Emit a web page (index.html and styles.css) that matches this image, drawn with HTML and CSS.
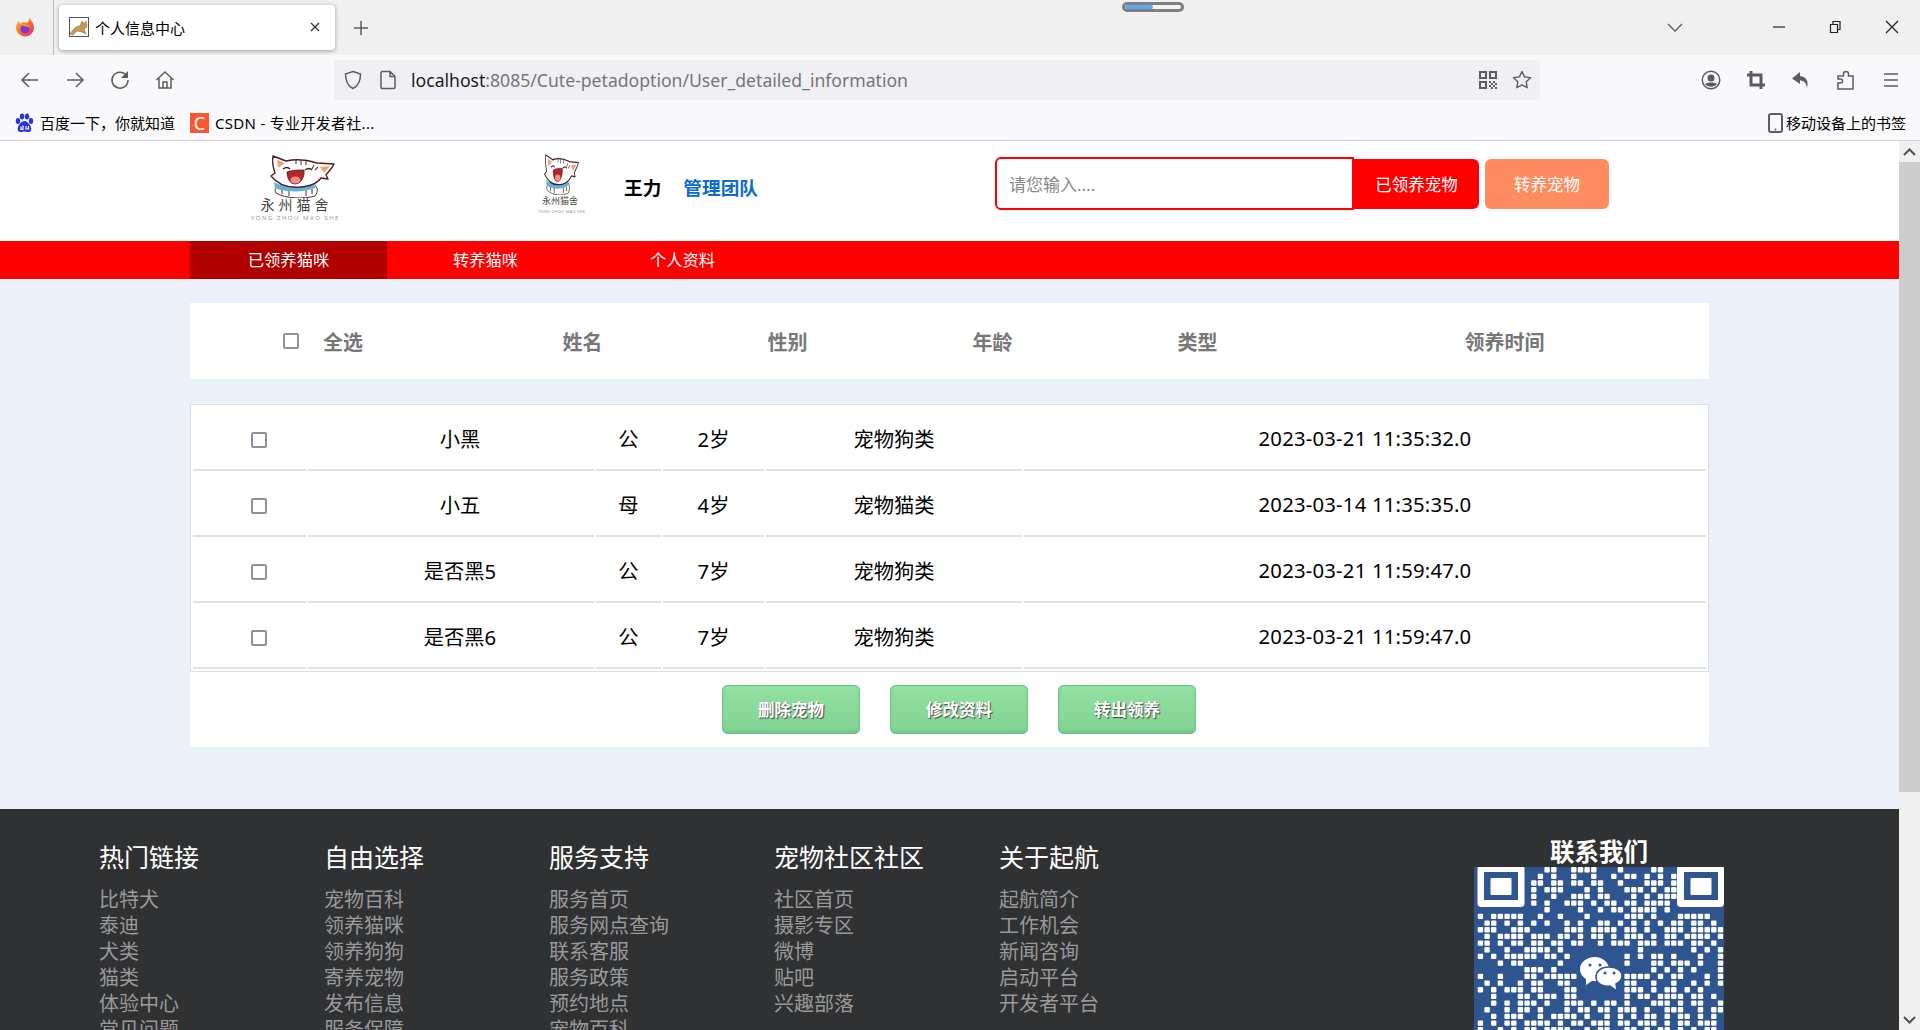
FILE: index.html
```html
<!DOCTYPE html>
<html lang="zh-CN">
<head>
    <meta charset="UTF-8">
    <meta name="viewport" content="width=device-width, initial-scale=1.0">
    <title>个人信息中心</title>
    <link rel="stylesheet" href="styles.css">
</head>
<body>
    <svg class="defs" width="0" height="0">
        <symbol id="cat" viewBox="0 0 65 43">
            <path d="M6 38 C3 33 8 30 14 30 L40 28 C48 30 49 36 45 41 C34 44 16 44 6 38Z" fill="#fff" stroke="#5a2a2a" stroke-width="1"/>
            <path d="M12 39v-5M19 41v-6M36 41v-6M42 39v-5" stroke="#5a2a2a" stroke-width="1"/>
            <path d="M4 27 C14 33 32 34 46 27 L45 33 C32 38 14 37 5 33Z" fill="#5fb3dc"/>
            <path d="M3 1 L16 6 C26 4 38 5 47 8 L64 9 C62 14 58 17 56 20 L58 24 L51 23 C46 30 34 33 24 32 C14 32 6 27 1 21 L5 18 C3 12 2 6 3 1Z" fill="#fff" stroke="#4a1f22" stroke-width="1.4" stroke-linejoin="round"/>
            <path d="M7 5 L15 8 L8 13Z" fill="#f6a173"/>
            <path d="M60 11 L50 12 L54 18Z" fill="#f6a173"/>
            <path d="M26 5v4M31 5v5M36 6v4M44 10l-2 4M48 12l-3 3" stroke="#5a4a4a" stroke-width="1.2"/>
            <path d="M13 14 q4-3 7 0M35 15 q4-3 7 0" fill="none" stroke="#3a1a1a" stroke-width="1.3"/>
            <path d="M17 17 C22 15 30 15 34 15 C35 23 30 29 25 29 C20 29 17 23 17 17Z" fill="#b3242c" stroke="#4a1f22" stroke-width=".8"/>
            <ellipse cx="25.500" cy="25" rx="5" ry="3.500" fill="#f08d8d"/>
        </symbol>
    </svg>

    <div class="browser">
        <div class="tabbar">
            <div class="ff-box">
                <svg width="20" height="20" viewBox="0 0 20 20">
                    <defs>
                        <linearGradient id="fox" x1="0" y1="0" x2="1" y2="1">
                            <stop offset="0" stop-color="#ffcb2e"/>
                            <stop offset=".5" stop-color="#ff6a2b"/>
                            <stop offset="1" stop-color="#e5266d"/>
                        </linearGradient>
                    </defs>
                    <path d="M14 0 C16 2 19 5 19 10 A9 9.500 0 1 1 1 8 C2 6 3 4 4 3 L5 6 C7 4 10 4 12 5 C14 4 14 2 14 0Z" fill="url(#fox)"/>
                    <circle cx="10" cy="11" r="4.500" fill="#7a3bd0"/>
                    <path d="M5 7 C8 5 14 6 15 10 C12 8 8 8 5 7Z" fill="#ff9a2e"/>
                </svg>
            </div>
            <div class="tab">
                <svg class="tab-icon" width="20" height="20" viewBox="0 0 20 20">
                    <rect x=".5" y=".5" width="19" height="19" fill="#fff" stroke="#555"/>
                    <path d="M1 17 C4 12 7 9 11 9 L13 4 L14 6 L16 6 L17 4 L18 10 L15 12 L17 17 L13 15 L8 14 L4 18Z" fill="#c79a4e" stroke="#7a5a20" stroke-width=".5"/>
                </svg>
                <span class="tab-title">个人信息中心</span>
                <svg class="tab-close" width="12" height="12" viewBox="0 0 12 12">
                    <path d="M2 2l8 8M10 2l-8 8" stroke="#333" stroke-width="1.300"/>
                </svg>
            </div>
            <svg class="new-tab" width="16" height="16" viewBox="0 0 16 16">
                <path d="M8 1v14M1 8h14" stroke="#5b5b66" stroke-width="1.500"/>
            </svg>
            <svg class="tab-list" width="16" height="10" viewBox="0 0 16 10">
                <path d="M1 1l7 7 7-7" fill="none" stroke="#5b5b66" stroke-width="1.300"/>
            </svg>
            <div class="win-btn">
                <svg width="14" height="14" viewBox="0 0 14 14"><path d="M1 7h12" stroke="#222" stroke-width="1.200"/></svg>
            </div>
            <div class="win-btn">
                <svg width="14" height="14" viewBox="0 0 14 14"><path d="M2.500 4.500h7v8h-7zM5 4.500v-3h7v8h-2.500" fill="none" stroke="#222" stroke-width="1.200"/></svg>
            </div>
            <div class="win-btn">
                <svg width="14" height="14" viewBox="0 0 14 14"><path d="M1 1l12 12M13 1l-12 12" stroke="#222" stroke-width="1.200"/></svg>
            </div>
        </div>
        <div class="pill"><span class="pill-fill"></span></div>

        <div class="toolbar">
            <div class="tool-btn">
                <svg width="20" height="20" viewBox="0 0 20 20"><path d="M18 10H2M9 3l-7 7 7 7" fill="none" stroke="#5b5b66" stroke-width="1.500"/></svg>
            </div>
            <div class="tool-btn">
                <svg width="20" height="20" viewBox="0 0 20 20"><path d="M2 10h16M11 3l7 7-7 7" fill="none" stroke="#5b5b66" stroke-width="1.500"/></svg>
            </div>
            <div class="tool-btn">
                <svg width="20" height="20" viewBox="0 0 20 20"><path d="M16.500 5.500A8 8 0 1 0 18 10" fill="none" stroke="#5b5b66" stroke-width="1.500"/><path d="M18 1v7h-7z" fill="#5b5b66"/></svg>
            </div>
            <div class="tool-btn">
                <svg width="20" height="20" viewBox="0 0 20 20"><path d="M1.500 10L10 2l8.500 8M4 8.500V18h12V8.500M8 18v-6h4v6" fill="none" stroke="#5b5b66" stroke-width="1.500"/></svg>
            </div>
            <div class="urlbar">
                <svg width="20" height="20" viewBox="0 0 20 20"><path d="M10 1.500L17.500 4C17.500 11 15 16 10 18.500 5 16 2.500 11 2.500 4Z" fill="none" stroke="#5b5b66" stroke-width="1.500"/></svg>
                <svg width="18" height="20" viewBox="0 0 18 20"><path d="M3 1.500h8l5 5V17a1.500 1.500 0 0 1-1.500 1.500h-11.500A1.500 1.500 0 0 1 2 17V2.500ZM11 1.500V6.500h5" fill="none" stroke="#5b5b66" stroke-width="1.500"/></svg>
                <span class="url-text"><span class="url-host">localhost</span>:8085/Cute-petadoption/User_detailed_information</span>
                <svg class="url-qr" width="18" height="18" viewBox="0 0 18 18">
                    <path d="M0 0h8v8H0zM2 2v4h4V2zM10 0h8v8h-8zM12 2v4h4V2zM0 10h8v8H0zM2 12v4h4v-4z" fill="#5b5b66" fill-rule="evenodd"/>
                    <path d="M10 10h2v2h-2zM14 10h2v2h-2zM12 12h2v2h-2zM16 12h2v2h-2zM10 14h2v2h-2zM14 14h2v2h-2zM12 16h2v2h-2zM16 16h2v2h-2z" fill="#5b5b66"/>
                </svg>
                <svg width="20" height="20" viewBox="0 0 20 20"><path d="M10 1.500l2.600 5.400 5.900.8-4.300 4.100 1 5.900-5.200-2.800-5.200 2.800 1-5.900-4.300-4.100 5.900-.8z" fill="none" stroke="#5b5b66" stroke-width="1.400" stroke-linejoin="round"/></svg>
            </div>
            <div class="tool-right">
                <div class="tool-btn">
                    <svg width="20" height="20" viewBox="0 0 20 20"><circle cx="10" cy="10" r="8.750" fill="none" stroke="#5b5b66" stroke-width="1.500"/><circle cx="10" cy="8" r="3.500" fill="#5b5b66"/><path d="M4 14c3-2 9-2 12 0-3 3.500-9 3.500-12 0z" fill="#5b5b66"/></svg>
                </div>
                <div class="tool-btn">
                    <svg width="20" height="20" viewBox="0 0 20 20"><path d="M5 1v14h14M1 5h14v14" fill="none" stroke="#5b5b66" stroke-width="3"/></svg>
                </div>
                <div class="tool-btn">
                    <svg width="20" height="20" viewBox="0 0 20 20"><path d="M9 2L1 8.500 9 14v-3.500c4 0 6 2 7 7 2-6-1-11-7-11.500z" fill="#5b5b66"/></svg>
                </div>
                <div class="tool-btn">
                    <svg width="20" height="20" viewBox="0 0 20 20"><path d="M2 19v-6h2.500a2 2 0 0 0 0-4H2V6h5.500V4a2.500 2.500 0 0 1 5 0v2H17v13z" fill="none" stroke="#5b5b66" stroke-width="1.500"/></svg>
                </div>
                <div class="tool-btn">
                    <svg width="18" height="16" viewBox="0 0 18 16"><path d="M2 2h14M2 8h14M2 14h14" stroke="#5b5b66" stroke-width="1.500"/></svg>
                </div>
            </div>
        </div>

        <div class="bookmarks">
            <div class="bookmark">
                <svg width="19" height="20" viewBox="0 0 19 20">
                    <ellipse cx="3" cy="8" rx="2.200" ry="3" fill="#2932e1"/>
                    <ellipse cx="7" cy="3.500" rx="2.200" ry="3" fill="#2932e1"/>
                    <ellipse cx="12" cy="3.500" rx="2.200" ry="3" fill="#2932e1"/>
                    <ellipse cx="16" cy="8" rx="2.200" ry="3" fill="#2932e1"/>
                    <path d="M9.500 8C13 8 17.500 14 16 17.500 14.500 20 11 18.500 9.500 18.500 8 18.500 4.500 20 3 17.500 1.500 14 6 8 9.500 8Z" fill="#2932e1"/>
                    <path d="M6 13.500v3h2v-4M11 13v3h2.500v-3" fill="none" stroke="#fff" stroke-width="1.200"/>
                </svg>
                <span>百度一下，你就知道</span>
            </div>
            <div class="bookmark">
                <span class="csdn-icon">C</span>
                <span class="csdn-text">CSDN - 专业开发者社...</span>
            </div>
            <div class="bookmark bookmark-mobile">
                <svg width="15" height="20" viewBox="0 0 15 20"><rect x="1" y="1" width="13" height="18" rx="2" fill="none" stroke="#5b5b66" stroke-width="2"/><circle cx="7.500" cy="16.500" r="1" fill="#5b5b66"/></svg>
                <span>移动设备上的书签</span>
            </div>
        </div>
    </div>

    <div class="viewport">
        <div class="page">
            <header class="site-header">
                <div class="logo">
                    <svg class="logo-cat" width="65" height="43"><use href="#cat"/></svg>
                    <div class="logo-name">永州猫舍</div>
                    <div class="logo-sub">YONG ZHOU MAO SHE</div>
                </div>
                <div class="logo logo-small">
                    <svg class="logo-cat" width="35" height="41" viewBox="0 0 65 43" preserveAspectRatio="none"><use href="#cat" width="65" height="43"/></svg>
                    <div class="logo-name">永州猫舍</div>
                    <div class="logo-sub">YONG ZHOU MAO SHE</div>
                </div>
                <span class="user-name">王力</span>
                <a class="team-link">管理团队</a>
                <div class="search">
                    <input class="search-input" type="text" placeholder="请您输入....">
                    <button class="search-btn">已领养宠物</button>
                    <button class="search-btn search-btn-orange">转养宠物</button>
                </div>
            </header>

            <nav class="site-nav">
                <a class="nav-item active">已领养猫咪</a>
                <a class="nav-item">转养猫咪</a>
                <a class="nav-item">个人资料</a>
            </nav>

            <main class="content">
                <div class="list-head">
                    <div class="head-select"><span class="check"></span>全选</div>
                    <div>姓名</div>
                    <div>性别</div>
                    <div>年龄</div>
                    <div>类型</div>
                    <div>领养时间</div>
                </div>

                <table class="pet-table">
                    <colgroup>
                        <col class="col-check">
                        <col class="col-name">
                        <col class="col-sex">
                        <col class="col-age">
                        <col class="col-type">
                        <col>
                    </colgroup>
                    <tr>
                        <td class="cell-check"><span class="check"></span></td>
                        <td class="cell-name">小黑</td>
                        <td>公</td>
                        <td>2岁</td>
                        <td>宠物狗类</td>
                        <td class="cell-time">2023-03-21 11:35:32.0</td>
                    </tr>
                    <tr>
                        <td class="cell-check"><span class="check"></span></td>
                        <td class="cell-name">小五</td>
                        <td>母</td>
                        <td>4岁</td>
                        <td>宠物猫类</td>
                        <td class="cell-time">2023-03-14 11:35:35.0</td>
                    </tr>
                    <tr>
                        <td class="cell-check"><span class="check"></span></td>
                        <td class="cell-name">是否黑5</td>
                        <td>公</td>
                        <td>7岁</td>
                        <td>宠物狗类</td>
                        <td class="cell-time">2023-03-21 11:59:47.0</td>
                    </tr>
                    <tr>
                        <td class="cell-check"><span class="check"></span></td>
                        <td class="cell-name">是否黑6</td>
                        <td>公</td>
                        <td>7岁</td>
                        <td>宠物狗类</td>
                        <td class="cell-time">2023-03-21 11:59:47.0</td>
                    </tr>
                </table>

                <div class="actions">
                    <button class="green-btn">删除宠物</button>
                    <button class="green-btn">修改资料</button>
                    <button class="green-btn">转出领养</button>
                </div>
            </main>

            <footer class="site-footer">
                <div class="foot-col">
                    <h3>热门链接</h3>
                    <a>比特犬</a><a>泰迪</a><a>犬类</a><a>猫类</a><a>体验中心</a><a>常见问题</a>
                </div>
                <div class="foot-col">
                    <h3>自由选择</h3>
                    <a>宠物百科</a><a>领养猫咪</a><a>领养狗狗</a><a>寄养宠物</a><a>发布信息</a><a>服务保障</a>
                </div>
                <div class="foot-col">
                    <h3>服务支持</h3>
                    <a>服务首页</a><a>服务网点查询</a><a>联系客服</a><a>服务政策</a><a>预约地点</a><a>宠物百科</a>
                </div>
                <div class="foot-col">
                    <h3>宠物社区社区</h3>
                    <a>社区首页</a><a>摄影专区</a><a>微博</a><a>贴吧</a><a>兴趣部落</a>
                </div>
                <div class="foot-col">
                    <h3>关于起航</h3>
                    <a>起航简介</a><a>工作机会</a><a>新闻咨询</a><a>启动平台</a><a>开发者平台</a>
                </div>
                <div class="contact">
                    <h3>联系我们</h3>
                    <svg class="qr" id="qr" width="250" height="250" viewBox="0 0 250 250">
                        <rect width="250" height="250" fill="#2f5591"/>
                        <g id="qr-dots" fill="#fff"></g>
                        <rect x="3.500" y="-2" width="47" height="42" rx="4" fill="#fff"/>
                        <rect x="10" y="5" width="34" height="28" fill="#2f5591"/>
                        <rect x="16.500" y="11" width="21" height="17" rx="1" fill="#fff"/>
                        <rect x="203" y="-2" width="47" height="42" rx="4" fill="#fff"/>
                        <rect x="210" y="5" width="34" height="28" fill="#2f5591"/>
                        <rect x="216.500" y="11" width="21" height="17" rx="1" fill="#fff"/>
                        <path d="M121 90 C112 90 106 96 106 102 C106 107 109 110 112 112 L112 118 L118 114 C126 115 135 110 135 102 C135 96 129 90 121 90Z" fill="#fff"/>
                        <path d="M135 100 C126 100 122 105 122 110 C122 116 128 120 136 119 L143 124 L142 117 C146 115 148 112 148 109 C148 104 143 100 135 100Z" fill="#fff" stroke="#2f5591" stroke-width="1.500"/>
                        <circle cx="116" cy="98" r="1.500" fill="#2f5591"/>
                        <circle cx="126" cy="98" r="1.500" fill="#2f5591"/>
                        <circle cx="131" cy="106" r="1.500" fill="#2f5591"/>
                        <circle cx="140" cy="106" r="1.500" fill="#2f5591"/>
                    </svg>
                </div>
            </footer>
        </div>

        <div class="scrollbar">
            <div class="scroll-arrow">
                <svg width="13" height="8" viewBox="0 0 13 8"><path d="M1 7l5.500-5.500L12 7" fill="none" stroke="#505050" stroke-width="2"/></svg>
            </div>
            <div class="scroll-track"><div class="scroll-thumb"></div></div>
            <div class="scroll-arrow">
                <svg width="13" height="8" viewBox="0 0 13 8"><path d="M1 1l5.500 5.500L12 1" fill="none" stroke="#505050" stroke-width="2"/></svg>
            </div>
        </div>
    </div>

    <script src="qr.js"></script>
</body>
</html>
```

FILE: styles.css
```css
* {
    box-sizing: border-box;
}

body {
    margin: 0;
    height: 100vh;
    display: flex;
    flex-direction: column;
    overflow: hidden;
    font-family: "Noto Sans", "Noto Sans CJK SC", sans-serif;
    color: #000;
}

.defs {
    position: absolute;
}

/* Browser frame */
.browser {
    position: relative;
    flex: none;
}

.tabbar {
    height: 55px;
    background: #f0f0f0;
    display: flex;
    align-items: center;
}

.ff-box {
    width: 54px;
    height: 55px;
    border-right: 1px solid #b8b8b8;
    display: flex;
    align-items: center;
    justify-content: center;
    padding-right: 4px;
}

.tab {
    width: 276px;
    height: 45px;
    margin-left: 5px;
    background: #fff;
    border-radius: 4px;
    box-shadow: 0 1px 4px rgba(0, 0, 0, 0.35);
    display: flex;
    align-items: center;
    padding: 0 14px 1px 10px;
}

.tab-title {
    font-size: 15px;
    margin-left: 6px;
    flex: 1;
}

.new-tab {
    margin-left: 18px;
}

.tab-list {
    margin-left: auto;
    margin-right: 68px;
}

.win-btn {
    width: 56.500px;
    height: 55px;
    display: flex;
    align-items: center;
    justify-content: center;
    padding-bottom: 2px;
}

.pill {
    position: absolute;
    left: 1122px;
    top: 2px;
    width: 62px;
    height: 10px;
    background: #f2f2f2;
    border: 3px solid #7f7f7f;
    border-radius: 5px;
}

.pill-fill {
    display: block;
    width: 28px;
    height: 4px;
    background: #5aa9f5;
    border-radius: 2px;
}

.toolbar {
    height: 55px;
    background: #f9f9fb;
    display: flex;
    align-items: center;
    padding: 0 7px 5px;
}

.tool-btn {
    width: 45px;
    height: 40px;
    display: flex;
    align-items: center;
    justify-content: center;
}

.urlbar {
    width: 1206px;
    height: 40px;
    margin-left: 147px;
    background: #f0f0f4;
    border-radius: 4px;
    display: flex;
    align-items: center;
    gap: 16px;
    padding: 0 8px 0 9px;
}

.url-text {
    font-size: 17.600px;
    color: #75757d;
    margin-left: -2px;
    flex: 1;
}

.url-host {
    color: #1c1b22;
}

.url-qr {
    margin-right: -1px;
}

.tool-right {
    margin-left: auto;
    display: flex;
}

.bookmarks {
    height: 31px;
    background: #f9f9fb;
    border-bottom: 1px solid #cfcfd8;
    display: flex;
    align-items: center;
    padding: 0 14px 5px 15px;
    font-size: 15px;
}

.bookmark {
    display: flex;
    align-items: center;
    gap: 6px;
    margin-right: 15px;
}

.bookmark-mobile {
    margin-left: auto;
    margin-right: 0;
    gap: 3px;
}

.csdn-icon {
    width: 19px;
    height: 20px;
    background: #fc5531;
    color: #fff;
    font-size: 18px;
    line-height: 20px;
    text-align: center;
}

.csdn-text {
    letter-spacing: 0.300px;
}

/* Page area */
.viewport {
    flex: 1;
    min-height: 0;
    display: flex;
}

.page {
    flex: 1;
    min-width: 0;
    overflow: hidden;
    background: #ecf0f9;
}

.scrollbar {
    width: 21px;
    background: #f0f0f0;
    display: flex;
    flex-direction: column;
}

.scroll-arrow {
    height: 21px;
    display: flex;
    align-items: center;
    justify-content: center;
}

.scroll-track {
    flex: 1;
}

.scroll-thumb {
    height: 630px;
    background: #cdcdcd;
}

.site-header {
    height: 100px;
    background: #fff;
    display: flex;
    align-items: flex-start;
    padding-left: 251px;
}

.logo {
    width: 91px;
    margin-top: 14px;
    text-align: center;
}

.logo-cat {
    display: block;
    margin-left: 19px;
}

.logo-name {
    font-size: 14px;
    line-height: 14px;
    letter-spacing: 4px;
    color: #444;
    white-space: nowrap;
}

.logo-sub {
    font-size: 6px;
    line-height: 8px;
    letter-spacing: 1.500px;
    color: #999;
    margin-top: 2px;
    margin-left: -2px;
    white-space: nowrap;
}

.logo-small {
    width: 44px;
    margin-left: 196px;
    margin-top: 13px;
}

.logo-small .logo-cat {
    margin-left: 6px;
}

.logo-small .logo-name {
    font-size: 9px;
    line-height: 12px;
    letter-spacing: 0;
}

.logo-small .logo-sub {
    font-size: 4px;
    line-height: 5px;
    letter-spacing: 0.300px;
    margin-left: 0;
}

.user-name,
.team-link {
    font-size: 18.670px;
    font-weight: bold;
    line-height: 26px;
    margin-top: 34px;
}

.user-name {
    margin-left: 42px;
}

.team-link {
    margin-left: 22px;
    color: #0a6ccf;
}

.search {
    margin-left: auto;
    margin-right: 290px;
    margin-top: 16px;
    display: flex;
    align-items: center;
}

.search-input {
    width: 359px;
    height: 53px;
    border: 2px solid #f00;
    border-radius: 6px 0 0 6px;
    padding: 2px 12px 0;
    font-size: 17px;
    font-family: inherit;
    outline: none;
}

.search-input::placeholder {
    color: #888;
}

.search-btn {
    width: 125px;
    height: 50px;
    border: none;
    border-radius: 0 6px 6px 0;
    background: #f00;
    color: #fff;
    font-size: 16.500px;
    font-family: inherit;
}

.search-btn-orange {
    width: 124px;
    margin-left: 6px;
    border-radius: 6px;
    background: #ff8c5f;
}

.site-nav {
    height: 38px;
    background: #f00;
    display: flex;
    padding-left: 190px;
}

.nav-item {
    width: 197px;
    color: #fff;
    font-size: 16.300px;
    line-height: 38px;
    text-align: center;
}

.nav-item.active {
    background: #b10000;
}

.content {
    padding: 24px 190px 62px;
}

.list-head {
    height: 76px;
    background: #fff;
    display: grid;
    grid-template-columns: 290px repeat(4, 205px) 1fr;
    align-items: center;
    text-align: center;
    font-size: 20px;
    font-weight: bold;
    color: #777;
    margin-bottom: 25px;
}

.head-select {
    display: flex;
    align-items: center;
    gap: 24px;
    padding-left: 93px;
}

.check {
    display: block;
    width: 16px;
    height: 16px;
    background: #fff;
    border: 2px solid #8f8f9d;
    border-radius: 2px;
}

.pet-table {
    width: 100%;
    table-layout: fixed;
    border-collapse: separate;
    border-spacing: 2px;
    border: 1px solid #dcdfe6;
    background: #fff;
    font-size: 20.300px;
}

.col-check {
    width: 113px;
}

.col-name {
    width: 286px;
}

.col-sex {
    width: 65px;
}

.col-age {
    width: 101px;
}

.col-type {
    width: 256px;
}

.pet-table td {
    height: 64px;
    padding: 0;
    text-align: center;
    border-bottom: 2px solid #dfe1e6;
}

.cell-check .check {
    margin: 3px 0 0 58px;
}

.pet-table .cell-name {
    padding-left: 18px;
}

.cell-time {
    letter-spacing: 0.200px;
}

.actions {
    background: #fff;
    padding: 13px 0 13px 532px;
    display: flex;
    gap: 30px;
}

.green-btn {
    width: 138px;
    height: 49px;
    border: 1px solid #6ec786;
    border-radius: 5px;
    background: linear-gradient(#92e0a2, #82d395);
    box-shadow: inset 0 -2px 2px rgba(80, 170, 100, 0.3);
    color: #fff;
    font-size: 16.500px;
    font-weight: bold;
    font-family: inherit;
    text-shadow: 1px 1px 1px #444;
    padding: 0 0 2px;
}

.site-footer {
    background: #303133;
    height: 330px;
    display: flex;
    padding-left: 99px;
}

.foot-col {
    width: 225px;
    padding-top: 32px;
}

.foot-col h3 {
    margin: 0 0 14px;
    font-size: 25px;
    font-weight: normal;
    line-height: 32px;
    color: #fff;
}

.foot-col a {
    display: block;
    font-size: 20px;
    line-height: 26px;
    color: #999;
}

.contact {
    width: 250px;
    margin-left: 250px;
    padding-top: 26px;
    text-align: center;
}

.contact h3 {
    margin: 0 0 -1px;
    font-size: 24.500px;
    line-height: 33px;
    color: #fff;
}

.qr {
    display: block;
}
```

FILE: qr.js
```js
// dot rows of the QR code, one char per module
const rows = [
    "..........##..####...#....##.........",
    ".........#.#..#..#..#.##.#.#.##......",
    "........##.##.##.##..#...###.#.......",
    "........#.###...#.#...###.#.##.......",
    "........#..#..###.##...#.#.###.......",
    "........#.#..###.#.##.##.####........",
    "..........#....#..#.##.####.#........",
    "#.#####..#..#...#.....###.#...#####..",
    ".##.#.#.#.#..#.#..##.#.#.#.#.##.##.#.",
    "###..###.....###.####.##.#..###.#####",
    ".#.####.###.##.#.##.#.###.#.##.####.#",
    "##.#.##.##.##.##..#.###.###.###.##.#.",
    ".#..#..####.#...........#.......#.#.#",
    "#.#.#####.##.#........#.#.##.#...#..#",
    "...#.##.....#.........#...##.###.#..#",
    ".......###.#..............#.#.#.#...#",
    "#..#...##.#####.......####.#.##...#.#",
    ".#.#..#.##..##........##..#..#..#.#.#",
    "#.#.###.##...##.......###.#.##.#.#...",
    "..#...##.###.##.......#.##.####.##.#.",
    "..#.#.###.#..###.#.##.#...###.#.##..#",
    ".#..#.##.#...#.##.##.###.#..###..#.##",
    "..#.###..#.####.#..#.#.#.##.#.##.#.#.",
    "#.#.##.####.#.##.###.##.###.#.##.###.",
    "#..#.#.##.####..#.##..##.#.##.#.#.##.",
    ".##.#.##..#.##.#.##.###.#.##.##.#.#.#"
];

const dots = document.getElementById("qr-dots");
let html = "";
rows.forEach((row, y) => {
    [...row].forEach((c, x) => {
        if (c === "#") {
            html += `<rect x="${(3.7 + x * 6.67).toFixed(1)}" y="${(y * 6.67).toFixed(1)}" width="5.4" height="5.4" rx="1"/>`;
        }
    });
});
dots.innerHTML = html;
```
